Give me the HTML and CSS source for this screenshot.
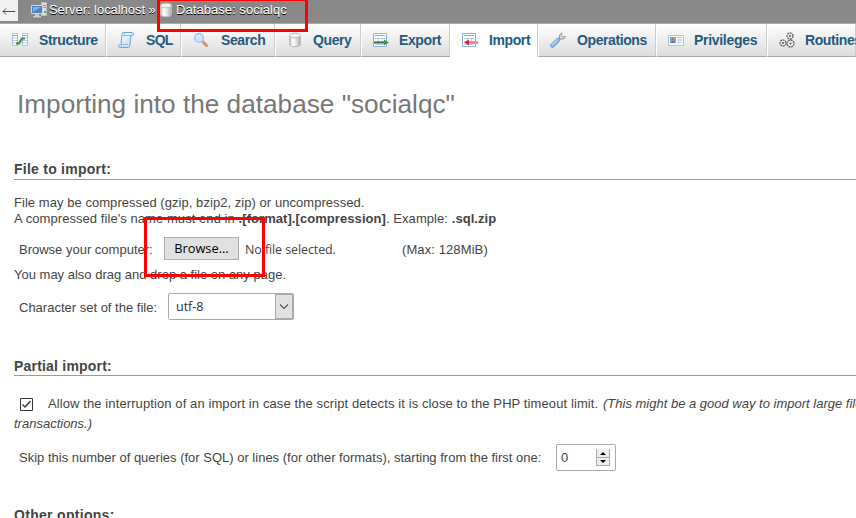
FILE: index.html
```html
<!DOCTYPE html>
<html lang="en">
<head>
<meta charset="utf-8">
<title>Import</title>
<link rel="stylesheet" href="styles.css">
</head>
<body>
<svg class="defs" width="0" height="0" aria-hidden="true">
  <defs>
    <linearGradient id="metal"><stop offset="0" stop-color="#bbb"/><stop offset=".3" stop-color="#fff"/><stop offset=".65" stop-color="#ddd"/><stop offset="1" stop-color="#aaa"/></linearGradient>
    <linearGradient id="paper" x2="1" y2="1"><stop offset="0" stop-color="#fff"/><stop offset="1" stop-color="#b5d4fa"/></linearGradient>
    <symbol id="db" viewBox="0 0 16 16"><path d="M2.500 3.500v9c0 3 11 3 11 0v-9" fill="url(#metal)" stroke="#bbb"/><ellipse cx="8" cy="3.500" rx="5.500" ry="2.300" fill="#f2f2f2" stroke="#c0c0c0"/></symbol>
    <symbol id="sheet" viewBox="0 0 16 16"><path d="M.5 1.500h13v13H.5z" fill="#fff" stroke="#8fb0dc"/><path d="M2 3.500h10" stroke="#83b877"/><path d="M2 6.500h10M2 9.500h10M2 12.500h10M5.500 6v7M9.500 6v7" stroke="#b7cde3"/></symbol>
  </defs>
</svg>
<header class="crumbs">
  <a class="back"><svg width="13" height="7" viewBox="0 0 13 7"><path d="M13 3.500H1M4 .5l-3 3 3 3" fill="none" stroke="#444"/></svg></a>
  <svg class="icon server" viewBox="0 0 16 16"><path d="M10.500.5h5v13h-5z" fill="#ddd" stroke="#bbb"/><path d="M11 3.500h4M11 5.500h4" stroke="#999"/><path d="M13 10h2" stroke="#4b4" stroke-width="2"/><path d="M.5 3.500h11v8H.5z" fill="#4e83c7" stroke="#d7d7d7"/><path d="M2 5h8L2 10z" fill="#83afe2"/><path d="M4 12h4v2H4zM2 14h8v1.500H2z" fill="#ccc"/></svg>
  <span class="server-name">Server: localhost »</span>
  <svg class="icon dbicon"><use href="#db"/></svg>
  <span class="db-name">Database: socialqc</span>
</header>
<nav class="tabs">
  <a class="tab structure"><svg class="icon" viewBox="0 0 16 16"><path d="M.5 1.500h5v12h-5zM10.500 1.500h5v12h-5z" fill="#fff" stroke="#a5bfe0"/><path d="M1 3.500h4M11 3.500h4" stroke="#8ab783"/><path d="M1 6h4M1 8.500h4M1 11h4M11 6h4M11 8.500h4M11 11h4" stroke="#b9cee8"/><path d="M4 11.500h3l3-5h3" fill="none" stroke="#438e43" stroke-width="2.200"/></svg><span>Structure</span></a>
  <a class="tab sql"><svg class="icon" viewBox="0 0 16 16"><path d="M5 .5h9c2 0 2 3 0 3h-1l-1 9c0 2-1 3-2 3H2c-2 0-2-3 0-3h1l1-10C4 1 4 .5 5 .5z" fill="url(#paper)" stroke="#6d9fdc"/><path d="M5 .5c2 0 2 3 0 3h8M2 15.500c2 0 2-3 0-3h8" fill="none" stroke="#8fb7e8"/></svg><span>SQL</span></a>
  <a class="tab search"><svg class="icon" viewBox="0 0 16 16"><path d="M9.500 9.500l4 4" stroke="#c99a68" stroke-width="3" stroke-linecap="round"/><circle cx="6" cy="6" r="4.300" fill="#cfe5fb" stroke="#a2c2ec" stroke-width="1.500"/><path d="M3.500 5.500c.5-2 2-2 3-2" stroke="#fff" fill="none"/></svg><span>Search</span></a>
  <a class="tab query"><svg class="icon"><use href="#db"/></svg><span>Query</span></a>
  <a class="tab export"><svg class="icon" viewBox="0 0 16 16"><use href="#sheet" width="16" height="16"/><path d="M1 10.500h11" stroke="#287c28" stroke-width="2"/><path d="M11 7.500l5 3-5 3z" fill="#419841"/></svg><span>Export</span></a>
  <a class="tab import active"><svg class="icon" viewBox="0 0 16 16"><use href="#sheet" width="16" height="16"/><path d="M6 10.500h10" stroke="#f47c7c" stroke-width="2.500"/><path d="M7 7.500l-5 3 5 3z" fill="#d82424"/></svg><span>Import</span></a>
  <a class="tab operations"><svg class="icon" viewBox="0 0 16 16"><path d="M8 8l4-4" stroke="#999" stroke-width="3"/><path d="M12 .8L9.500 3v3l1 1h3L15.500 4.500 13 5l-2-2z" fill="#ddd" stroke="#999"/><path d="M2.500 13.500l5-5" stroke="#6e95d8" stroke-width="4.500" stroke-linecap="round"/><path d="M2.500 13l5-5" stroke="#a9c5f3" stroke-width="2.500" stroke-linecap="round"/></svg><span>Operations</span></a>
  <a class="tab privileges"><svg class="icon" viewBox="0 0 16 16"><path d="M.5 3.500h15v10H.5z" fill="#f7f7f7" stroke="#c4c4c4"/><path d="M2 5h6v6H2z" fill="#79aee8"/><circle cx="5" cy="7" r="1.500" fill="#b47945"/><path d="M3 11c0-3 4-3 4 0" fill="#5779b7"/><path d="M9.500 5.500H14M9.500 8H14M9.500 10.500H13" stroke="#aebdcc"/></svg><span>Privileges</span></a>
  <a class="tab routines"><svg class="icon" viewBox="0 0 16 16"><g fill="#eee" stroke="#666" stroke-width="1.300"><circle cx="11" cy="4" r="3" stroke-dasharray="2 .7"/><circle cx="4" cy="11" r="3" stroke-dasharray="2 .7"/><circle cx="11.500" cy="11.500" r="3.500" stroke-dasharray="2 .7"/></g><g fill="#555"><circle cx="11" cy="4" r="1"/><circle cx="4" cy="11" r="1"/><circle cx="11.500" cy="11.500" r="1"/></g></svg><span>Routines</span></a>
</nav>
<main>
  <h1><span>Importing into the database "socialqc"</span></h1>
  <h2 class="file-title"><span>File to import:</span></h2>
  <div class="notes">
    <p><span class="n1">File may be compressed (gzip, bzip2, zip) or uncompressed.</span></p>
    <p><span class="n2">A compressed file's name must end in <b>.[format].[compression]</b>. Example: <b>.sql.zip</b></span></p>
  </div>
  <div class="row browse-row">
    <label>Browse your computer:</label>
    <button class="browse"><span>Browse...</span></button>
    <span class="nofile">No file selected.</span>
    <span class="max">(Max: 128MiB)</span>
  </div>
  <p class="drag"><span>You may also drag and drop a file on any page.</span></p>
  <div class="row charset-row">
    <label>Character set of the file:</label>
    <div class="select"><span>utf-8</span><i><svg width="10" height="6" viewBox="0 0 10 6"><path d="M1 .5l4 4 4-4" fill="none" stroke="#555" stroke-width="1.200"/></svg></i></div>
  </div>
  <h2 class="partial-title"><span>Partial import:</span></h2>
  <div class="allow">
    <svg class="check" width="13" height="13" viewBox="0 0 13 13"><path d="M.5.5h12v12H.5z" fill="#fff" stroke="#333"/><path d="M2.500 6.500L5 9l5.500-6" fill="none" stroke="#333" stroke-width="1.300"/></svg>
    <span class="allow-text">Allow the interruption of an import in case the script detects it is close to the PHP timeout limit.</span>
    <em class="hint">(This might be a good way to import large files,</em>
  </div>
  <p class="trans"><em>transactions.)</em></p>
  <div class="row skip-row">
    <label>Skip this number of queries (for SQL) or lines (for other formats), starting from the first one:</label>
    <div class="number"><span>0</span><div class="spin"><i><svg width="6" height="3"><path d="M0 3l3-3 3 3z"/></svg></i><i><svg width="6" height="3"><path d="M0 0l3 3 3-3z"/></svg></i></div></div>
  </div>
  <h2 class="other-title"><span>Other options:</span></h2>
</main>
<div class="mark mark-db"></div>
<div class="mark mark-browse"></div>
</body>
</html>
```
FILE: styles.css
```css
* { box-sizing: border-box; }
html, body { margin: 0; width: 856px; height: 518px; overflow: hidden; }
body { position: relative; background: #fff; color: #444; font: 13px/16px "Liberation Sans", Arial, sans-serif; }
span, label, em, a { white-space: nowrap; }
p, h1, h2 { margin: 0; }
.defs { display: block; height: 0; }
.icon { width: 16px; height: 16px; flex: none; }

.crumbs { display: flex; align-items: center; height: 23px; padding-bottom: 3px; background: #888; color: #fff; text-shadow: 0 1px 0 #000; }
.back { display: flex; align-items: center; width: 18px; height: 21px; margin-bottom: -1px; padding: 2px 0 0 2px; background: #f2f2f2; }
.server { margin: 0 2px 0 13px; }
.server-name { width: 109px; letter-spacing: -.05px; }
.dbicon { margin-right: 2px; }
.db-name { letter-spacing: .05px; }

.tabs { display: flex; overflow: hidden; height: 34px; border-top: 1px solid #aaa; background: #eee; }
.tab { display: flex; align-items: center; flex: none; border-left: 1px solid #fff; border-right: 1px solid #ccc; border-bottom: 1px solid #aaa; background: linear-gradient(#fff, #dcdcdc); color: #235a81; font-weight: bold; font-size: 14px; letter-spacing: -.4px; }
.tab.active { background: #fff; border-bottom-color: #fff; }
.tab span { margin-left: 11px; }
.structure { width: 106px; padding-left: 12px; border-left: 0; }
.sql { width: 75px; padding-left: 11px; }
.sql span { margin-left: 12px; letter-spacing: -.7px; }
.search { width: 94px; padding-left: 11px; }
.search span { margin-left: 12px; }
.query { width: 86px; padding-left: 11px; }
.query span { margin-left: 10px; }
.export { width: 89px; padding-left: 11px; }
.export span { margin-left: 10px; }
.import { width: 88px; padding-left: 11px; }
.operations { width: 118px; padding-left: 11px; }
.privileges { width: 111px; padding-left: 11px; }
.privileges span { margin-left: 10px; letter-spacing: -.3px; }
.routines { width: 89px; padding-left: 11px; }
.routines span { margin-left: 10px; }

main { padding-left: 14px; }
h1 { height: 102px; padding: 30px 0 0 3px; font-size: 26.200px; line-height: 34px; font-weight: normal; color: #777; }
h2 { height: 21px; border-bottom: 1px solid #999; font-size: 14px; line-height: 20px; letter-spacing: .25px; }
.notes { padding-top: 15px; height: 55px; }
.n1 { letter-spacing: .05px; }
.n2 { letter-spacing: .065px; }
.row { display: flex; align-items: center; padding-left: 5px; }
.browse-row { height: 30px; }
.browse-row label { width: 145px; }
.browse { width: 75px; height: 23px; margin-top: -3px; padding: 0; border: 1px solid #adadad; background: #e1e1e1; color: #000; font: 12.800px/21px "Open Sans", sans-serif; }
.nofile { width: 157px; margin-left: 6px; font-family: "Open Sans", sans-serif; font-size: 12.500px; letter-spacing: -.1px; }
.max { letter-spacing: .1px; }
.drag { height: 24px; line-height: 20px; }
.charset-row { height: 37px; }
.charset-row label { width: 149px; }
.select { display: flex; width: 126px; height: 27px; margin-top: -2px; border: 1px solid #aaa; border-radius: 2px; padding-left: 7px; align-items: center; justify-content: space-between; font-family: "Open Sans", sans-serif; font-size: 12.500px; color: #333; }
.select i { display: flex; align-items: center; justify-content: center; width: 18px; height: 25px; border: 1px solid #aaa; background: #e1e1e1; }
.partial-title { margin-top: 29px; line-height: 22px; letter-spacing: .2px; }
.allow { display: flex; align-items: center; height: 20px; margin-top: 18px; padding-left: 6px; }
.check { flex: none; margin-right: 15px; }
.allow-text { width: 555px; flex: none; letter-spacing: .1px; }
.trans { height: 20px; line-height: 20px; }
.skip-row { height: 27px; margin-top: 10px; }
.skip-row label { width: 537px; }
.number { display: flex; width: 60px; height: 27px; border: 1px solid #aaa; border-radius: 2px; padding: 0 5px 0 4px; align-items: center; justify-content: space-between; }
.spin { width: 14px; height: 17px; background: #eee; }
.spin i { display: flex; height: 8.500px; align-items: center; justify-content: center; border: 1px solid #aaa; border-top-color: #eee; }
.other-title { margin-top: 34px; letter-spacing: .3px; }

.mark { position: absolute; border: 3px solid #f00; }
.mark-db { left: 157px; top: -2px; width: 151px; height: 34px; }
.mark-browse { left: 144px; top: 217px; width: 121px; height: 60px; }
```
